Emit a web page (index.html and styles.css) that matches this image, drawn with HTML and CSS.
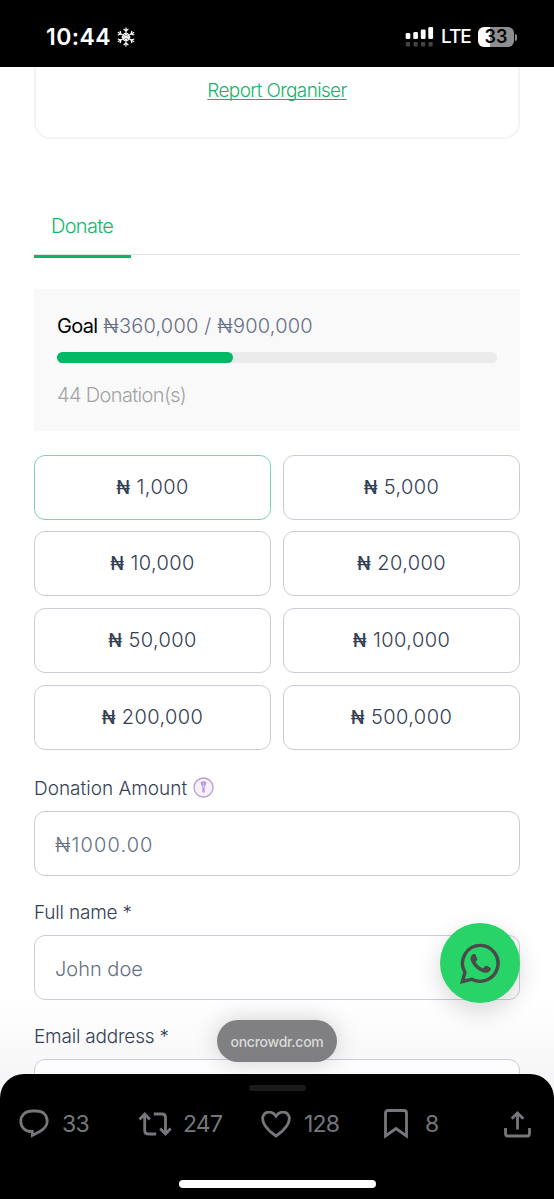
FILE: index.html
```html
<!DOCTYPE html>
<html lang="en">
<head>
<meta charset="utf-8">
<title>Donate</title>
<link rel="stylesheet" href="styles.css">
</head>
<body>

<div class="status">
  <span class="time">10:44</span>
  <svg class="snow" width="20" height="20" viewBox="0 0 20 20">
    <g id="arm"><path d="M10 10V.6M7.600 1.800L10 4.200l2.400-2.400M8.200 6.200L10 8l1.800-1.800"/></g>
    <use href="#arm" transform="rotate(60 10 10)"/>
    <use href="#arm" transform="rotate(120 10 10)"/>
    <use href="#arm" transform="rotate(180 10 10)"/>
    <use href="#arm" transform="rotate(240 10 10)"/>
    <use href="#arm" transform="rotate(300 10 10)"/>
  </svg>
  <svg class="signal" width="29" height="20" viewBox="0 0 29 20">
    <g fill="#fff">
      <rect x=".7" y="6" width="4.6" height="6" rx="1.3"/><rect x="8.3" y="5" width="4.6" height="7" rx="1.3"/>
      <rect x="15.8" y="2.5" width="4.8" height="9.5" rx="1.3"/><rect x="23.3" y="0" width="4.8" height="12" rx="1.3"/>
    </g>
    <g fill="#434343">
      <rect x=".9" y="15" width="4.2" height="4.4" rx="1"/><rect x="8.5" y="15" width="4.2" height="4.4" rx="1"/>
      <rect x="16" y="15" width="4.2" height="4.4" rx="1"/><rect x="23.5" y="15" width="4.2" height="4.4" rx="1"/>
    </g>
  </svg>
  <span class="lte">LTE</span>
  <span class="battery">33</span><i class="nub"></i>
</div>

<div class="page">
  <div class="organiser"><a href="#">Report Organiser</a></div>

  <div class="tabs"><span class="tab">Donate</span></div>

  <div class="goal">
    <div class="goal-text"><b>Goal</b> ₦360,000 / ₦900,000</div>
    <div class="bar"><div class="fill" style="width:40%"></div></div>
    <div class="count">44 Donation(s)</div>
  </div>

  <div class="amounts">
    <button class="active"><i>₦</i> 1,000</button>
    <button><i>₦</i> 5,000</button>
    <button><i>₦</i> 10,000</button>
    <button><i>₦</i> 20,000</button>
    <button><i>₦</i> 50,000</button>
    <button><i>₦</i> 100,000</button>
    <button><i>₦</i> 200,000</button>
    <button><i>₦</i> 500,000</button>
  </div>

  <label class="lb-amount" for="amount">Donation Amount
    <svg width="21" height="21" viewBox="0 0 21 21">
      <circle cx="10.5" cy="10.5" r="9.5" fill="#f6f0fb" stroke="#b79fd0" stroke-width="1.3"/>
      <path d="M7.600 5.200q2.900-2 5.800 0-.2 2.700-1.700 4.100v6.200H9.300V9.300Q7.800 7.900 7.600 5.200z" fill="#bb99dc"/>
      <path d="M10.500 6v5" stroke="#d9c5ec"/>
    </svg>
  </label>
  <input class="in-amount" id="amount" placeholder="₦1000.00">

  <label for="fullname">Full name *</label>
  <input id="fullname" placeholder="John doe">

  <label for="email">Email address *</label>
  <input id="email">
</div>

<!--floating over the page-->
<div class="whatsapp">
  <svg width="41" height="41" viewBox="0 0 24 24" fill="#4a4a4a">
    <path transform="translate(.3 .2) scale(.98)" d="M17.472 14.382c-.297-.149-1.758-.867-2.030-.967-.273-.099-.471-.148-.670.150-.197.297-.767.966-.940 1.164-.173.199-.347.223-.644.075-.297-.150-1.255-.463-2.390-1.475-.883-.788-1.480-1.761-1.653-2.059-.173-.297-.018-.458.130-.606.134-.133.298-.347.446-.520.149-.174.198-.298.298-.497.099-.198.050-.371-.025-.520-.075-.149-.669-1.612-.916-2.207-.242-.579-.487-.500-.669-.510-.173-.008-.371-.010-.570-.010-.198 0-.520.074-.792.372-.272.297-1.040 1.016-1.040 2.479 0 1.462 1.065 2.875 1.213 3.074.149.198 2.096 3.200 5.077 4.487.709.306 1.262.489 1.694.625.712.227 1.360.195 1.871.118.571-.085 1.758-.719 2.006-1.413.248-.694.248-1.289.173-1.413-.074-.124-.272-.198-.570-.347"/>
    <path d="M12 1.400A10.500 10.500 0 0 0 2.900 17.200L1.400 22.600l5.500-1.400A10.500 10.500 0 1 0 12 1.400z" fill="none" stroke="#4a4a4a" stroke-width="2"/>
  </svg>
</div>
<div class="domain">oncrowdr.com</div>

<div class="sheet">
  <div class="grabber"></div>
  <div class="actions">
    <span class="act reply">
      <svg width="32" height="30" viewBox="0 0 32 30"><path d="M13.500 2h3.500C24 2 28.200 6 28.200 12.200c0 4.500-2.500 7.400-7 10L13.300 26.500v-4C6 22.800 1.800 18.200 1.800 12.200 1.800 6 6.500 2 13.500 2z"/></svg>33</span>
    <span class="act retweet">
      <svg width="34" height="24" viewBox="0 0 34 24"><path d="M1.500 7.500L6.700 2l5.200 5.500M6.700 2.500v16q0 3.500 3.500 3.500h8M15.800 2H24q3.500 0 3.500 3.500v16M22.200 16.500l5.300 5.500 5.200-5.500"/></svg>247</span>
    <span class="act like">
      <svg width="30" height="27" viewBox="0 0 30 27"><path d="M15 5.200C11.500-.2 5-.2 2.500 4.200-.8 11 6.500 19.500 15 25 23.500 19.500 30.800 11 27.500 4.200 25-.2 18.500-.2 15 5.200z"/></svg>128</span>
    <span class="act mark">
      <svg width="24" height="30" viewBox="0 0 24 30"><path d="M1.500 27V4q0-2.500 2.500-2.500h16q2.500 0 2.500 2.500v23L12 19.500z"/></svg>8</span>
    <span class="act share">
      <svg width="27" height="27" viewBox="0 0 27 27"><path d="M13.500 18.500V2M7.700 7.800l5.800-5.800 5.800 5.800M1.500 17v5.500q0 2.500 2.500 2.500h19q2.500 0 2.500-2.500V17"/></svg></span>
  </div>
  <div class="home"></div>
</div>

</body>
</html>
```
FILE: styles.css
```css
* {box-sizing:border-box;}
body {margin:0; width:554px; height:1199px; overflow:hidden; position:relative;
  background:#fff; color:#344054; font:300 20px/28px Inter, "Noto Sans", sans-serif;}
i {font-style:normal;}

.status {height:67px; background:#000; color:#fff; display:flex; align-items:center; padding:7px 37px 0 46px;}
.time {font-size:23px; font-weight:600; letter-spacing:.4px;}
.snow {margin-left:5px; fill:none; stroke:#fff; stroke-width:1.200;}
.signal {margin-left:auto;}
.lte {font-size:19px; font-weight:500; margin-left:7px; width:29px; letter-spacing:-1px;}
.battery {width:36px; height:20px; margin-left:8px; border-radius:6px; color:#000; text-align:center;
  font-size:18px; font-weight:600; line-height:20px; background:linear-gradient(90deg, #fff 34%, #8e8e8e 34%);}
.nub {width:2px; height:7px; margin-left:1px; border-radius:0 3px 3px 0; background:#8e8e8e;}

.page {height:1132px; padding:0 34px; overflow:hidden; display:flex; flex-direction:column;
  background:linear-gradient(#fff 930px, #f5f5f7 1020px);}
.organiser {height:72px; flex:none; border:2px solid #f4f4f4; border-top:0; border-radius:0 0 16px 16px;
  text-align:center; padding-top:9px;}
.organiser a {color:#1ab16a; font-size:19px; letter-spacing:-.65px; text-underline-offset:2px;
  text-decoration-thickness:1px; text-decoration-skip-ink:none;}

.tabs {height:119px; flex:none; padding-top:73px; display:flex; box-shadow:inset 0 -3px #fff, inset 0 -4px #e4e4e7;}
.tab {width:97px; height:46px; padding-left:17px; border-bottom:3px solid #0cb665; color:#12b76a; letter-spacing:-.7px;}

.goal {height:142px; flex:none; margin-top:31px; padding:23px; background:#f9f9f9;}
.goal-text {color:#667085; letter-spacing:.2px;}
.goal-text b {color:#000; font-weight:400; letter-spacing:-.7px;}
.bar {height:11px; margin-top:12px; border-radius:6px; background:#ebebeb;}
.fill {height:11px; border-radius:6px; background:#00b964;}
.count {margin-top:18px; color:#a3a3a3; letter-spacing:-.65px;}

.amounts {display:grid; grid-template-columns:1fr 1fr; gap:11.700px 12px; margin-top:23.500px;}
.amounts button {height:65px; padding:0; border:1.500px solid #c9ced6; border-radius:11px; background:#fff;
  color:#344054; font:inherit; letter-spacing:.4px;}
.amounts .active {border-color:#78d5a8;}
.amounts i {font-weight:500; font-size:18px;}

label {flex:none; height:28px; margin:22.500px 0 8.500px; font-size:19px; letter-spacing:-.2px;
  display:flex; align-items:center;}
label svg {margin:-2px 0 0 6px;}
.lb-amount {margin:25px 0 8.500px; letter-spacing:0;}
input {height:65px; flex:none; width:100%; padding:2px 20px 0; border:1.500px solid #c9ced6; border-radius:11px;
  background:rgba(255,255,255,.7); font:inherit;}
.in-amount {letter-spacing:1.100px;}
input::placeholder {color:#667085; opacity:1;}

.whatsapp {position:absolute; left:440px; top:923px; width:80px; height:80px; border-radius:50%;
  display:flex; align-items:center; justify-content:center; background:#28d368; box-shadow:0 8px 24px rgba(0,0,0,.16);}
.domain {position:absolute; left:217px; top:1020px; width:120px; height:42px; border-radius:21px; background:#808082;
  color:#dadada; text-align:center; font-size:14px; font-weight:500; line-height:43px; letter-spacing:-.25px;
  box-shadow:0 0 24px rgba(0,0,0,.18);}

.sheet {position:absolute; left:0; right:0; bottom:0; height:125px; background:#000; border-radius:24px 24px 0 0;
  padding-top:11px;}
.grabber {width:57px; height:6px; margin:0 auto; border-radius:3px; background:#1b1b1c;}
.actions {height:66px; display:flex; align-items:center; color:#75777b; font-size:23px; letter-spacing:-.8px;}
.actions svg {fill:none; stroke:#75777b; stroke-width:2.800;}
.act {display:flex; align-items:center; flex:none; font-weight:400;}
.reply {width:119px; padding-left:19px;}
.reply svg {margin-right:11px;}
.retweet {width:142px; padding-left:19px;}
.retweet svg {margin-right:11px;}
.like {width:123px;}
.like svg {margin-right:13px;}
.mark {width:120px;}
.mark svg {margin-right:17px;}
.home {width:197px; height:8px; margin:23px auto 0; border-radius:4px; background:#fff;}
```
